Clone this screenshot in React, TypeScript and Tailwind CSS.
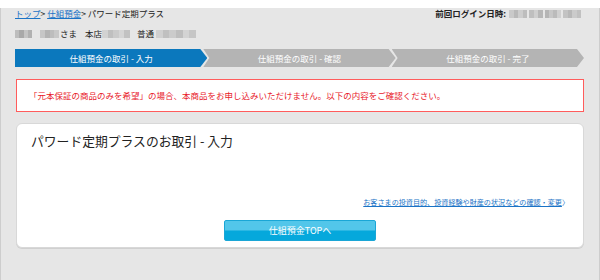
import React from "react";

const font = { fontFamily: '"Noto Sans CJK JP", "Noto Sans", sans-serif' };

function Mosaic({ w, shades }: { w: number; shades: string[] }) {
  return (
    <span className="inline-flex h-[8px] align-middle" style={{ width: w }}>
      {shades.map((c, i) => (
        <span key={i} className="h-full flex-1" style={{ backgroundColor: c }} />
      ))}
    </span>
  );
}

function Step({ label, active, first }: { label: string; active?: boolean; first?: boolean }) {
  const clip = first
    ? "polygon(0 0, calc(100% - 7px) 0, 100% 50%, calc(100% - 7px) 100%, 0 100%)"
    : "polygon(0 0, calc(100% - 7px) 0, 100% 50%, calc(100% - 7px) 100%, 0 100%, 6px 50%)";
  return (
    <div
      className={`flex-1 h-[18px] flex items-center justify-center text-white text-[8.5px] ${
        active ? "bg-[#0b78bd]" : "bg-[#b4b4b4]"
      } ${first ? "" : "-ml-[4px]"}`}
      style={{ clipPath: clip }}
    >
      {label}
    </div>
  );
}

export default function App() {
  return (
    <div
      className="w-[600px] h-[280px] bg-[#e6e6e6] border-r border-b border-l border-[#cdcdcd] px-[14px] text-[#222]"
      style={font}
    >
      <div className="flex justify-between items-center h-[11px] mt-[8px] text-[8.5px] leading-none">
        <div className="flex items-center">
          <span className="text-[#1a73c6] underline">トップ</span>
          <span>&gt;&nbsp;</span>
          <span className="text-[#1a73c6] underline">仕組預金</span>
          <span>&gt; パワード定期プラス</span>
        </div>
        <div className="flex items-center mr-[4px]">
          <span className="font-bold">前回ログイン日時:</span>
          <span className="ml-[3px] flex gap-[2px]">
            <Mosaic w={18} shades={["#c9c9c9", "#b9b9b9", "#cdcdcd", "#bdbdbd"]} />
            <Mosaic w={14} shades={["#bfbfbf", "#cfcfcf", "#b7b7b7"]} />
            <Mosaic w={16} shades={["#b5b5b5", "#c7c7c7", "#bbbbbb", "#d0d0d0"]} />
            <Mosaic w={18} shades={["#c3c3c3", "#b8b8b8", "#cbcbcb", "#c1c1c1"]} />
          </span>
        </div>
      </div>

      <div className="flex items-center h-[11px] mt-[9px] text-[8.5px] leading-none">
        <Mosaic w={17} shades={["#bdbdbd", "#a9a9a9", "#c4c4c4", "#b1b1b1"]} />
        <span className="ml-[8px]" />
        <Mosaic w={19} shades={["#c6c6c6", "#b3b3b3", "#bdbdbd", "#c8c8c8"]} />
        <span className="ml-[1px]">さま</span>
        <span className="ml-[8px]">本店</span>
        <Mosaic w={28} shades={["#d2d2d2", "#bfbfbf", "#cacaca", "#d5d5d5", "#c2c2c2"]} />
        <span className="ml-[7px]">普通</span>
        <span className="ml-[2px]" />
        <Mosaic w={40} shades={["#d0d0d0", "#c0c0c0", "#cbcbcb", "#bebebe", "#d3d3d3", "#c6c6c6"]} />
      </div>

      <div className="flex mt-[10px] pr-[1px]">
        <Step first active label="仕組預金の取引 - 入力" />
        <Step label="仕組預金の取引 - 確認" />
        <Step label="仕組預金の取引 - 完了" />
      </div>

      <div className="mt-[12px] h-[33px] mx-[1px] border border-[#ff5c5c] bg-white flex items-center pl-[12px] text-[8.5px] text-[#e8202a]">
        「元本保証の商品のみを希望」の場合、本商品をお申し込みいただけません。以下の内容をご確認ください。
      </div>

      <div className="mt-[11px] mx-[1px] h-[125px] bg-white border border-[#d8d8d8] rounded-[6px] shadow-[0_1px_0_#d0d0d0] flex flex-col">
        <div className="pt-[9px] pl-[14px] text-[12.8px] leading-[16px] text-[#222]">
          パワード定期プラスのお取引 - 入力
        </div>
        <div className="mt-[49px] flex justify-end pr-[14px] text-[7.1px] leading-[9px]">
          <span className="text-[#1a73c6] underline">お客さまの投資目的、投資経験や財産の状況などの確認・変更</span>
          <span className="text-[#1a73c6]">〉</span>
        </div>
        <div className="mt-[13px] flex justify-center">
          <div className="w-[152px] h-[21px] rounded-[2px] overflow-hidden relative flex items-center justify-center text-white text-[9px] bg-[linear-gradient(to_bottom,#52c6ea_0%,#52c6ea_48%,#05a8dc_52%,#05a8dc_100%)] border border-[#1aa6d6]">
            仕組預金TOPへ
          </div>
        </div>
      </div>
    </div>
  );
}
